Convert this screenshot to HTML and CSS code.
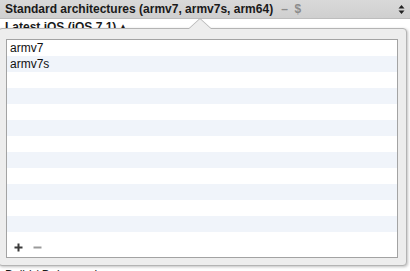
FILE: index.html
```html
<!DOCTYPE html>
<html>
<head>
<meta charset="utf-8">
<link rel="stylesheet" href="styles.css">
</head>
<body>
<div class="page">
  <div class="bar">
    <span class="bar-title">Standard architectures (armv7, armv7s, arm64)</span>
    <span class="bar-muted">–&nbsp;&nbsp;$</span>
    <span class="stepper">
      <svg width="7" height="11" viewBox="0 0 7 11"><path d="M3.5 1 L6.5 4.5 L0.5 4.5 Z M3.5 10 L6.5 6.5 L0.5 6.5 Z" fill="#222"/></svg>
    </span>
  </div>
  <div class="row">Latest iOS (iOS 7.1) ▴</div>
  <div class="row row-lower">Build / Debug-only</div>

  <div class="popover">
    <div class="arrow"></div>
    <div class="table">
      <div class="list">
        <div class="item">armv7</div>
        <div class="item alt">armv7s</div>
        <div class="item"></div>
        <div class="item alt"></div>
        <div class="item"></div>
        <div class="item alt"></div>
        <div class="item"></div>
        <div class="item alt"></div>
        <div class="item"></div>
        <div class="item alt"></div>
        <div class="item"></div>
        <div class="item alt"></div>
      </div>
      <div class="footer">
        <span class="btn">
          <svg width="9" height="9" viewBox="0 0 9 9"><path d="M4.5 0.5 V8.5 M0.5 4.5 H8.5" stroke="#3a3a3a" stroke-width="2"/></svg>
        </span>
        <span class="btn">
          <svg width="9" height="9" viewBox="0 0 9 9"><path d="M0.5 4.5 H8.5" stroke="#9a9a9a" stroke-width="2"/></svg>
        </span>
      </div>
    </div>
  </div>
</div>
</body>
</html>
```

FILE: styles.css
```css
html, body {
  margin: 0;
  padding: 0;
}
body {
  width: 410px;
  height: 271px;
  overflow: hidden;
  background: #ffffff;
  font-family: "Liberation Sans", Arial, sans-serif;
}
.page {
  position: relative;
  width: 410px;
  height: 271px;
}
.bar {
  height: 19px;
  display: flex;
  align-items: center;
  padding-left: 5px;
  background: linear-gradient(#d9d9d9, #cfcfcf);
  border-bottom: 1px solid #bdbdbd;
  box-sizing: border-box;
  font-size: 12px;
  font-weight: bold;
  color: #1a1a1a;
}
.bar-title {
  white-space: nowrap;
}
.bar-muted {
  margin-left: 8px;
  color: #8c8c8c;
  font-weight: bold;
}
.stepper {
  margin-left: auto;
  margin-right: 5px;
  display: flex;
  align-items: center;
}
.row {
  height: 16px;
  padding-left: 5px;
  font-size: 12px;
  font-weight: bold;
  color: #1a1a1a;
  line-height: 16px;
  white-space: nowrap;
}
.row-lower {
  margin-top: 232px;
  font-weight: normal;
}
.popover {
  position: absolute;
  left: -2px;
  top: 28px;
  width: 409px;
  height: 238px;
  box-sizing: border-box;
  background: #ededed;
  border: 1px solid #b4b4b4;
  border-radius: 4px;
  box-shadow: 1px 1px 3px rgba(0,0,0,0.25);
  padding: 10px 8px 8px 7px;
}
.arrow {
  position: absolute;
  left: 190px;
  top: -10px;
  width: 0;
  height: 0;
  border-left: 11px solid transparent;
  border-right: 11px solid transparent;
  border-bottom: 10px solid #ededed;
  filter: drop-shadow(0 -1px 0 #b4b4b4);
}
.table {
  height: 219px;
  box-sizing: border-box;
  border: 1px solid #a3a3a3;
  background: #ffffff;
  display: flex;
  flex-direction: column;
}
.list {
  display: flex;
  flex-direction: column;
}
.item {
  height: 16px;
  line-height: 16px;
  padding-left: 3px;
  font-size: 12px;
  color: #111;
  background: #ffffff;
}
.item.alt {
  background: #f0f4fa;
}
.footer {
  flex: 1;
  display: flex;
  align-items: center;
  gap: 10px;
  padding-left: 7px;
  padding-top: 6px;
}
.btn {
  display: flex;
  width: 9px;
  height: 9px;
}
```
